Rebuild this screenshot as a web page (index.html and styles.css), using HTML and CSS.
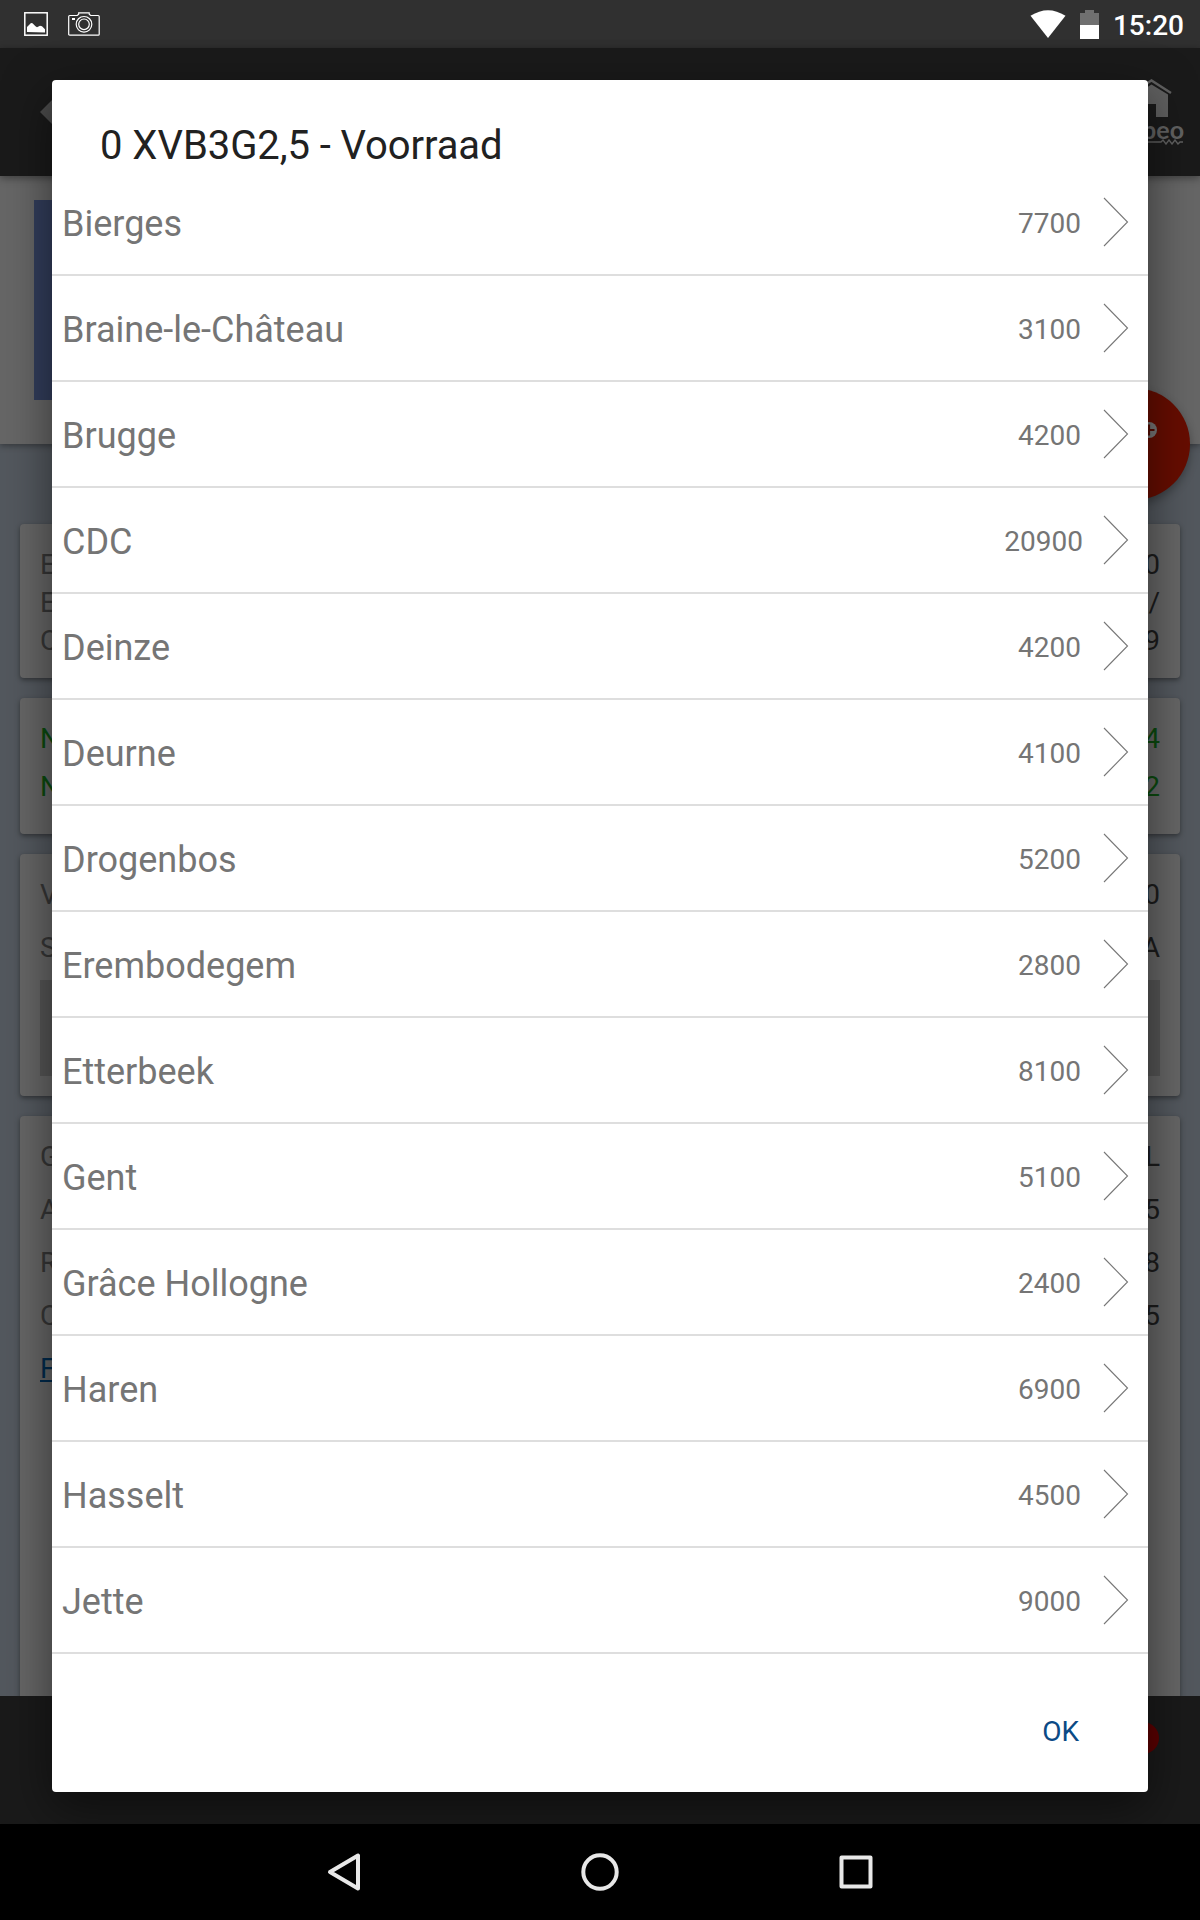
FILE: index.html
```html
<!DOCTYPE html>
<html lang="nl">
  <head>
    <meta charset="UTF-8" />
    <meta name="viewport" content="width=device-width, initial-scale=1.0" />
    <title>Voorraad</title>
    <link rel="stylesheet" href="styles.css">
  </head>
  <body>
    <div class="status-bar">
      <svg class="icon-picture" width="24" height="24" viewBox="0 0 24 24">
        <rect x="0.8" y="0.8" width="22.4" height="22.4" fill="none" stroke="#fff" stroke-width="1.5" />
        <path d="M3 20v-5l4-4 1.500 0.300 3 3 1.500 1 3-1.500 2 0.500 3 3v3.200z" fill="#fff" />
      </svg>
      <svg class="icon-camera" width="32" height="24" viewBox="0 0 32 24">
        <path d="M1.700 3.500h7.500l1.500-1.300V0.800h10.500v1.400l1.500 1.300h7.500q1 0 1 1v17.700q0 1-1 1H1.700q-1 0-1-1V4.500q0-1 1-1z" fill="none" stroke="#fff" stroke-width="1.200" />
        <circle cx="16" cy="12.300" r="7.800" fill="none" stroke="#fff" stroke-width="1.200" />
        <circle cx="16" cy="12.300" r="5.300" fill="none" stroke="#fff" stroke-width="1.200" />
        <rect x="4" y="6" width="3" height="2" fill="#fff" />
      </svg>
      <div class="spacer"></div>
      <svg class="icon-wifi" width="36" height="28" viewBox="0 0 36 28">
        <path d="M0.500 5.800Q18-5.500 35.500 5.800L18 28z" fill="#fff" />
      </svg>
      <svg class="icon-battery" width="20" height="29" viewBox="0 0 20 29">
        <path d="M0 3h5V0h9v3h5v12H0z" fill="#707070" />
        <rect y="15" width="19" height="14" fill="#fff" />
      </svg>
      <span class="clock">15:20</span>
    </div>

    <div class="app-bar">
      <svg width="24" height="24" viewBox="0 0 24 24">
        <path d="M0 12L12 0h12v24H12z" fill="#4b4b4b" />
      </svg>
      <div class="logo">
        <svg width="44" height="40" viewBox="0 0 44 40">
          <path d="M2 15L23.500 1.500L43 14" fill="none" stroke="#606060" stroke-width="2.500" />
          <path d="M7 16L23.500 5.500L40 15.500V38H28V25H19V38H7z" fill="#606060" />
        </svg>
        <span class="logo-text">beo</span>
        <svg class="logo-wave" width="48" height="6" viewBox="0 0 48 6">
          <path d="M0 3h26l2-2 3 4 3-4 3 4 3-4 3 4 2-2h3" fill="none" stroke="#606060" stroke-width="1.400" />
        </svg>
      </div>
    </div>

    <div class="hero">
      <div class="photo"></div>
      <div class="fab">
        <svg width="18" height="18" viewBox="0 0 18 18">
          <circle cx="9" cy="9" r="8" fill="#777" />
          <path d="M9 3.500v11M3.500 9h11" stroke="#560b00" stroke-width="2.200" />
        </svg>
      </div>
    </div>

    <div class="content">
      <div class="card dates">
        <div class="line"><span>E</span><b>0</b></div>
        <div class="line"><span>E</span><b>/</b></div>
        <div class="line"><span>C</span><b>9</b></div>
      </div>
      <div class="card prices">
        <div class="line"><span>N</span><b>4</b></div>
        <div class="line"><span>N</span><b>2</b></div>
      </div>
      <div class="card stock">
        <div class="line"><span>V</span><b>0</b></div>
        <div class="line"><span>S</span><b>A</b></div>
        <div class="stock-button"></div>
      </div>
      <div class="card details">
        <div class="line"><span>G</span><b>L</b></div>
        <div class="line"><span>A</span><b>5</b></div>
        <div class="line"><span>R</span><b>8</b></div>
        <div class="line"><span>C</span><b>5</b></div>
        <div class="line"><a>F</a></div>
      </div>
    </div>

    <div class="bottom-bar"><div class="badge"></div></div>

    <div class="nav-bar">
      <div class="nav-item">
        <svg width="40" height="40" viewBox="0 0 40 40">
          <path d="M6 20L34 3.500v33z" fill="none" stroke="#e8e8e8" stroke-width="4" stroke-linejoin="round" />
        </svg>
      </div>
      <div class="nav-item">
        <svg width="40" height="40" viewBox="0 0 40 40">
          <circle cx="20" cy="20" r="16.700" fill="none" stroke="#e8e8e8" stroke-width="4" />
        </svg>
      </div>
      <div class="nav-item">
        <svg width="40" height="40" viewBox="0 0 40 40">
          <rect x="5.500" y="5.500" width="29" height="29" fill="none" stroke="#e8e8e8" stroke-width="4" stroke-linejoin="round" />
        </svg>
      </div>
    </div>

    <div class="dialog">
      <h1>0 XVB3G2,5 - Voorraad</h1>
      <div id="stores">
        <!-- Store rows will be populated here -->
      </div>
      <div class="actions">
        <button>OK</button>
      </div>
    </div>

    <script>
      const stores = [
        ["Bierges", 7700],
        ["Braine-le-Château", 3100],
        ["Brugge", 4200],
        ["CDC", 20900],
        ["Deinze", 4200],
        ["Deurne", 4100],
        ["Drogenbos", 5200],
        ["Erembodegem", 2800],
        ["Etterbeek", 8100],
        ["Gent", 5100],
        ["Grâce Hollogne", 2400],
        ["Haren", 6900],
        ["Hasselt", 4500],
        ["Jette", 9000],
      ];

      document.getElementById("stores").innerHTML = stores
        .map(
          ([name, amount]) => `
        <div class="store">
          <span class="store-name">${name}</span>
          <span class="store-amount">${amount}</span>
          <svg width="26" height="50" viewBox="0 0 26 50">
            <path d="M1 1L24.500 25L1 49" fill="none" stroke="#777" stroke-width="1.100" />
          </svg>
        </div>`
        )
        .join("");
    </script>
  </body>
</html>
```
FILE: styles.css
```css
* {
  box-sizing: border-box;
}
body {
  margin: 0;
  width: 1200px;
  height: 1920px;
  position: relative;
  overflow: hidden;
  display: flex;
  flex-direction: column;
  background-color: #53585e;
  font-family: Roboto, sans-serif;
  font-size: 28px;
}
svg {
  display: block;
  flex-shrink: 0;
}

/* Android status bar */
.status-bar {
  height: 48px;
  flex-shrink: 0;
  display: flex;
  align-items: center;
  padding: 0 16px 0 24px;
  background-color: #303030;
  color: #fff;
}
.icon-camera {
  margin-left: 20px;
}
.spacer {
  flex: 1;
}
.icon-wifi {
  margin-right: 14px;
}
.icon-battery {
  margin-right: 13px;
}
.clock {
  font-weight: 500;
  line-height: 44px;
  padding-top: 4px;
}

/* Page behind the dialog */
.app-bar {
  height: 128px;
  flex-shrink: 0;
  display: flex;
  align-items: center;
  justify-content: space-between;
  padding: 0 16px 0 40px;
  background-color: #1a1a1a;
  box-shadow: 0 2px 8px rgba(0, 0, 0, 0.4);
  z-index: 1;
}
.logo {
  width: 56px;
  padding-bottom: 1px;
}
.logo-text {
  display: block;
  font-family: Lato, sans-serif;
  font-size: 25px;
  font-weight: 700;
  line-height: 20px;
  text-align: right;
  color: #626262;
}
.logo-wave {
  margin-left: 7px;
}
.hero {
  height: 268px;
  flex-shrink: 0;
  position: relative;
  padding: 24px 34px;
  background-color: #666;
  box-shadow: 0 2px 6px rgba(0, 0, 0, 0.35);
}
.photo {
  width: 200px;
  height: 200px;
  background-color: #323d5b;
}
.fab {
  position: absolute;
  right: 10px;
  bottom: -56px;
  width: 112px;
  height: 112px;
  border-radius: 50%;
  background-color: #660d00;
  box-shadow: 0 4px 10px rgba(0, 0, 0, 0.3);
  padding: 33px 0 0 62px;
}
.content {
  flex: 1;
  min-height: 0;
  overflow: hidden;
  display: flex;
  flex-direction: column;
  gap: 20px;
  padding: 80px 20px 0;
}
.card {
  flex-shrink: 0;
  padding: 14px 20px 20px;
  border-radius: 4px;
  background-color: #666;
  color: #363636;
  box-shadow: 0 2px 5px rgba(0, 0, 0, 0.4);
}
.line {
  display: flex;
  justify-content: space-between;
  line-height: 53px;
}
.line b {
  font-weight: 400;
  color: #1c1c1c;
}
.line a {
  color: #002a4c;
  text-decoration: underline;
}
.dates {
  height: 154px;
  padding-top: 22px;
}
.dates .line {
  line-height: 38px;
}
.prices {
  height: 136px;
  padding-top: 17px;
}
.prices .line {
  line-height: 48px;
}
.prices .line,
.prices .line b {
  color: #0b4a0e;
}
.stock {
  height: 242px;
}
.stock-button {
  height: 96px;
  margin-top: 6px;
  background-color: #555;
}
.details {
  height: 600px;
}
.bottom-bar {
  height: 128px;
  flex-shrink: 0;
  display: flex;
  align-items: flex-start;
  justify-content: flex-end;
  padding: 26px 41px 0;
  background-color: #1a1a1a;
}
.badge {
  width: 32px;
  height: 32px;
  border-radius: 50%;
  background-color: #5c0000;
}
.nav-bar {
  height: 96px;
  flex-shrink: 0;
  display: flex;
  justify-content: center;
  align-items: center;
  background-color: #000;
  z-index: 3;
}
.nav-item {
  width: 256px;
  display: flex;
  justify-content: center;
}

/* Stock dialog */
.dialog {
  position: absolute;
  top: 80px;
  left: 52px;
  width: 1096px;
  height: 1712px;
  border-radius: 4px;
  background-color: #fff;
  box-shadow: 0 16px 48px rgba(0, 0, 0, 0.5);
  z-index: 2;
}
.dialog h1 {
  margin: 0;
  height: 90px;
  padding: 37px 48px 0;
  font-size: 40px;
  font-weight: 400;
  line-height: 58px;
  letter-spacing: -0.08px;
  color: #212121;
}
.store {
  height: 106px;
  display: flex;
  align-items: center;
  padding: 0 19px 0 10px;
  border-bottom: 2px solid #dedede;
  color: #757575;
}
.store-name {
  flex: 1;
  padding-top: 3px;
  font-size: 36px;
}
.store-amount {
  min-width: 65px;
  margin-right: 20px;
  padding-top: 3px;
}
.actions {
  display: flex;
  justify-content: flex-end;
  padding: 52px 69px 0;
}
.actions button {
  padding: 0;
  border: none;
  background: none;
  font: inherit;
  line-height: 52px;
  color: #0b4a85;
}
```
